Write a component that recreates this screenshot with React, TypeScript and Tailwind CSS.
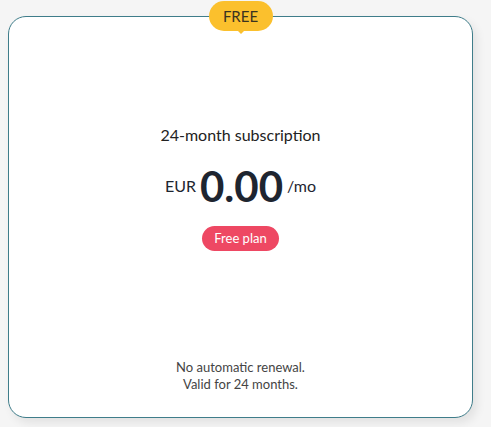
import React from 'react'

export default function App() {
  return (
    <div className="h-[427px] w-[491px] bg-[#f5f5f5] pt-4 pl-2" style={{ fontFamily: 'Lato, "Open Sans", sans-serif' }}>
      <div className="relative flex h-[402px] w-[465px] flex-col items-center rounded-[18px] border border-[#3f7d8a] bg-white pt-[106px] pb-[24px] shadow-[4px_5px_10px_rgba(0,0,0,0.08)]">
        <div className="absolute -top-4 left-1/2 -translate-x-1/2">
          <div className="relative flex h-[30px] w-[64px] items-center justify-center rounded-full bg-[#fbc02d] text-[15px] text-[#3a3320]">
            FREE
            <span className="absolute left-1/2 top-[28px] h-0 w-0 -translate-x-1/2 border-x-[5px] border-t-[5px] border-x-transparent border-t-[#fbc02d]" />
          </div>
        </div>

        <h2 className="text-[16px] leading-6 text-[#222]">24-month subscription</h2>

        <div className="mt-[17px] flex items-center gap-1 text-[#1e2530]">
          <span className="text-[16px]">EUR</span>
          <span className="text-[42px] font-bold leading-[44px]">0.00</span>
          <span className="text-[16px]">/mo</span>
        </div>

        <button className="mt-[18px] h-[25px] rounded-full bg-[#ee4863] px-3 text-[13px] text-white">Free plan</button>

        <div className="mt-auto text-center text-[13px] leading-[17px] text-[#444]">
          <p>No automatic renewal.</p>
          <p>Valid for 24 months.</p>
        </div>
      </div>
    </div>
  )
}
